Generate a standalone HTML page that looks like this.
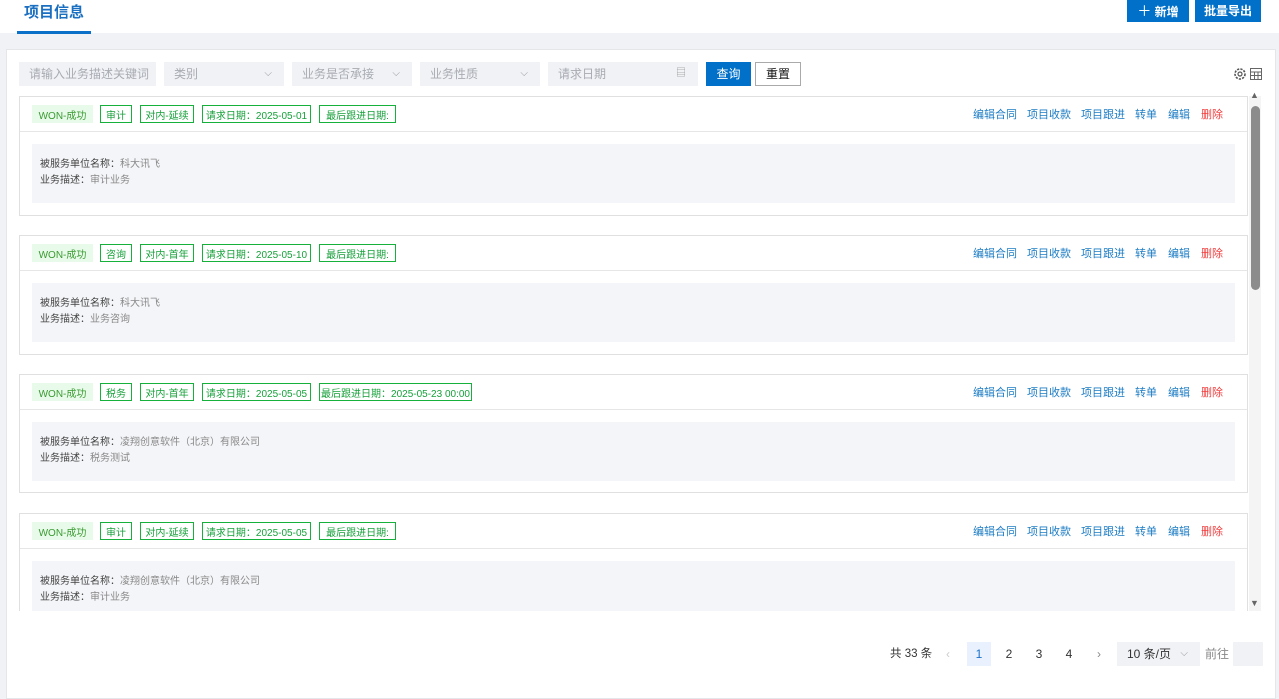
<!DOCTYPE html>
<html><head><meta charset="utf-8"><style>
*{box-sizing:border-box;margin:0;padding:0}
body{width:1279px;height:691px;overflow:hidden;background:#f0f2f5;font-family:"Liberation Sans","Noto Sans CJK SC",sans-serif;position:relative;font-size:12px}
.abs{position:absolute}
.hdr{left:0;top:0;width:1279px;height:33px;background:#fff}
.panel{left:6px;top:49px;width:1270px;height:650px;background:#fff;border:1px solid #e4e6ea}
.inp{top:62px;height:24px;background:#f0f2f5;color:#a8abb2;font-size:12px;line-height:24px;padding-left:10px}
.arr{position:absolute;right:12px;top:0;color:#999;font-size:10px}
.btn{color:#fff;background:#0070c9;font-size:12px;text-align:center;font-weight:bold}
.card{left:19px;width:1229px;height:120px;border:1px solid #e0e0e0;background:#fff}
.card .sep{position:absolute;left:0;right:0;top:34px;border-top:1px solid #e6e6e6}
.tag{position:absolute;top:8px;height:18px;border:1px solid #16b13a;color:#16a03a;font-size:10px;display:flex;align-items:center;justify-content:center;white-space:nowrap}
.won{border-color:#e8fbea;background:#e8fbea;color:#3a9a30}
.acts{position:absolute;top:9px;font-size:11px;color:#1c7cc4;white-space:nowrap}
.acts span{position:absolute}
.box{position:absolute;left:12px;top:47px;width:1203px;height:59px;background:#f4f5f8;font-size:10px;color:#444;padding:13px 0 0 8px;line-height:16px}
.box i{font-style:normal;color:#888}
.pg{top:642px;height:24px;line-height:24px;font-size:12px;color:#333;text-align:center;white-space:nowrap}
</style></head><body>
<div class="abs hdr"></div>
<div class="abs" style="left:24px;top:1px;font-size:15px;font-weight:bold;color:#1a6fc0">项目信息</div>
<div class="abs" style="left:17px;top:31px;width:74px;height:3px;background:#0a70c8"></div>
<div class="abs btn" style="left:1127px;top:0;width:62px;height:22px;line-height:22px"><span style="font-weight:normal;font-size:14px">＋</span> 新增</div>
<div class="abs btn" style="left:1195px;top:0;width:66px;height:22px;line-height:22px">批量导出</div>
<div class="abs panel"></div>
<div class="abs inp" style="left:19px;width:137px">请输入业务描述关键词</div>
<div class="abs inp" style="left:164px;width:120px">类别<span class="arr">⌵</span></div>
<div class="abs inp" style="left:292px;width:120px">业务是否承接<span class="arr">⌵</span></div>
<div class="abs inp" style="left:420px;width:120px">业务性质<span class="arr">⌵</span></div>
<div class="abs inp" style="left:548px;width:150px">请求日期<span class="arr" style="font-size:10px">▤</span></div>
<div class="abs btn" style="left:706px;top:62px;width:45px;height:24px;line-height:24px;font-weight:normal">查询</div>
<div class="abs" style="left:755px;top:62px;width:46px;height:24px;line-height:22px;border:1px solid #aaa;text-align:center;color:#111">重置</div>
<svg class="abs" style="left:1233px;top:66px" width="30" height="16" viewBox="0 0 30 16"><circle cx="7" cy="8" r="5" fill="none" stroke="#555" stroke-width="1.6" stroke-dasharray="2.2 1.2"/><circle cx="7" cy="8" r="2" fill="none" stroke="#555" stroke-width="1.2"/><rect x="17.5" y="2.5" width="11" height="11" fill="none" stroke="#666"/><path d="M17.5 6h11M17.5 9.5h11M21.5 6v7.5M25 6v7.5" stroke="#666"/></svg>

<div class="abs" style="left:1249px;top:96px;width:12px;height:515px;background:#f4f4f4"></div>
<div class="abs" style="left:1251px;top:106px;width:9px;height:184px;background:#8c8c8c;border-radius:5px"></div>
<div class="abs" style="left:1250px;top:90px;color:#666;font-size:9px">▲</div>
<div class="abs" style="left:1250px;top:598px;color:#666;font-size:9px">▼</div>

<div class="abs" style="left:0;top:96px;width:1249px;height:515px;overflow:hidden">
<div class="abs card" style="top:0"><div class="sep"></div>
<div class="tag won" style="left:12px;width:61px">WON-成功</div><div class="tag" style="left:80px;width:32px">审计</div><div class="tag" style="left:120px;width:54px">对内-延续</div><div class="tag" style="left:182px;width:109px">请求日期：2025-05-01</div><div class="tag" style="left:299px;width:77px">最后跟进日期:</div>
<div class="acts"><span style="left:953px">编辑合同</span><span style="left:1007px">项目收款</span><span style="left:1061px">项目跟进</span><span style="left:1115px">转单</span><span style="left:1148px">编辑</span><span style="left:1181px;color:#f03c3c">删除</span></div>
<div class="box">被服务单位名称：<i>科大讯飞</i><br>业务描述：<i>审计业务</i></div></div>
<div class="abs card" style="top:139px"><div class="sep"></div>
<div class="tag won" style="left:12px;width:61px">WON-成功</div><div class="tag" style="left:80px;width:32px">咨询</div><div class="tag" style="left:120px;width:54px">对内-首年</div><div class="tag" style="left:182px;width:109px">请求日期：2025-05-10</div><div class="tag" style="left:299px;width:77px">最后跟进日期:</div>
<div class="acts"><span style="left:953px">编辑合同</span><span style="left:1007px">项目收款</span><span style="left:1061px">项目跟进</span><span style="left:1115px">转单</span><span style="left:1148px">编辑</span><span style="left:1181px;color:#f03c3c">删除</span></div>
<div class="box">被服务单位名称：<i>科大讯飞</i><br>业务描述：<i>业务咨询</i></div></div>
<div class="abs card" style="top:278px;height:119px"><div class="sep"></div>
<div class="tag won" style="left:12px;width:61px">WON-成功</div><div class="tag" style="left:80px;width:32px">税务</div><div class="tag" style="left:120px;width:54px">对内-首年</div><div class="tag" style="left:182px;width:109px">请求日期：2025-05-05</div><div class="tag" style="left:299px;width:153px">最后跟进日期：2025-05-23 00:00</div>
<div class="acts"><span style="left:953px">编辑合同</span><span style="left:1007px">项目收款</span><span style="left:1061px">项目跟进</span><span style="left:1115px">转单</span><span style="left:1148px">编辑</span><span style="left:1181px;color:#f03c3c">删除</span></div>
<div class="box">被服务单位名称：<i>凌翔创意软件（北京）有限公司</i><br>业务描述：<i>税务测试</i></div></div>
<div class="abs card" style="top:417px"><div class="sep"></div>
<div class="tag won" style="left:12px;width:61px">WON-成功</div><div class="tag" style="left:80px;width:32px">审计</div><div class="tag" style="left:120px;width:54px">对内-延续</div><div class="tag" style="left:182px;width:109px">请求日期：2025-05-05</div><div class="tag" style="left:299px;width:77px">最后跟进日期:</div>
<div class="acts"><span style="left:953px">编辑合同</span><span style="left:1007px">项目收款</span><span style="left:1061px">项目跟进</span><span style="left:1115px">转单</span><span style="left:1148px">编辑</span><span style="left:1181px;color:#f03c3c">删除</span></div>
<div class="box">被服务单位名称：<i>凌翔创意软件（北京）有限公司</i><br>业务描述：<i>审计业务</i></div></div>
</div>

<div class="abs pg" style="left:890px;width:46px;text-align:left;font-size:11.5px">共 33 条</div>
<div class="abs pg" style="left:940px;width:16px;color:#ccc">‹</div>
<div class="abs pg" style="left:967px;width:24px;background:#e8f1fd;color:#1a70c8">1</div>
<div class="abs pg" style="left:997px;width:24px">2</div>
<div class="abs pg" style="left:1027px;width:24px">3</div>
<div class="abs pg" style="left:1057px;width:24px">4</div>
<div class="abs pg" style="left:1087px;width:24px;color:#888">›</div>
<div class="abs pg" style="left:1117px;width:83px;background:#f0f2f5;text-align:left;padding-left:10px">10 条/页<span style="position:absolute;right:12px;color:#999;font-size:10px">⌵</span></div>
<div class="abs pg" style="left:1205px;width:24px;color:#888">前往</div>
<div class="abs pg" style="left:1233px;width:30px;background:#f0f2f5"></div>
</body></html>
